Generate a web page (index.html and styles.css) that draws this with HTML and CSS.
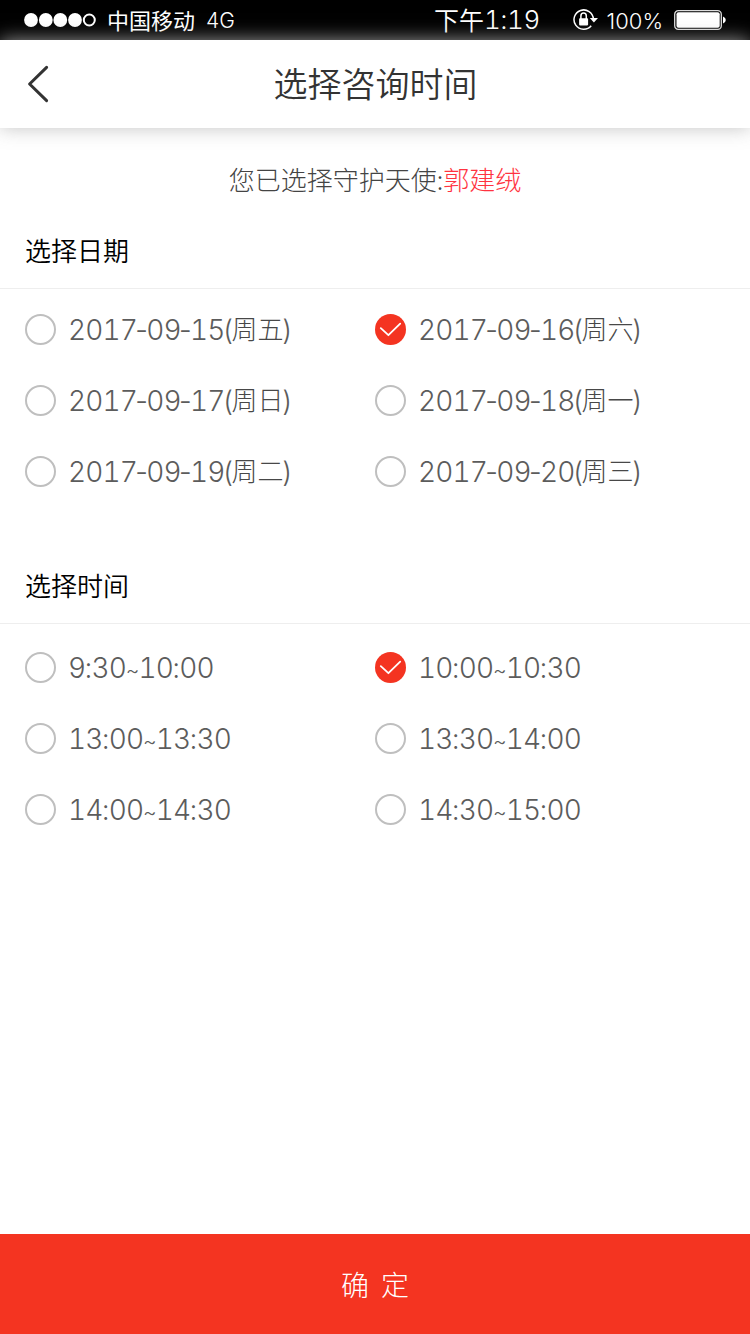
FILE: index.html
```html
<!DOCTYPE html>
<html lang="zh-CN">
<head>
<meta charset="utf-8">
<title>选择咨询时间</title>
<link rel="stylesheet" href="styles.css">
</head>
<body>
<div class="screen">
  <div class="status">
    <div class="status-left">
      <svg class="signal" width="72" height="14" viewBox="0 0 72 14" fill="#fff">
        <circle cx="7" cy="7" r="6.9"/><circle cx="21.8" cy="7" r="6.9"/><circle cx="36.3" cy="7" r="6.9"/><circle cx="51" cy="7" r="6.9"/>
        <circle cx="65.3" cy="7" r="5.5" fill="none" stroke="#fff" stroke-width="2"/>
      </svg>
      <span class="carrier">中国移动</span><span class="network">4G</span>
    </div>
    <div class="clock"><span class="period">下午</span><span class="hour">1<span class="colon">:</span>19</span></div>
    <div class="status-right">
      <svg class="lock" width="25" height="22" viewBox="0 0 25 22">
        <path d="M18.2 16.8A9.7 9.7 0 1 1 20.4 10" fill="none" stroke="#fff" stroke-width="1.5"/>
        <path d="M16.8 9h8.2l-4.1 4.5z" fill="#fff"/>
        <rect x="6.1" y="9.2" width="9" height="7.2" rx=".8" fill="#fff"/>
        <path d="M7.9 10V7a2.7 2.9 0 0 1 5.4 0V10" fill="none" stroke="#fff" stroke-width="1.5"/>
      </svg>
      <span class="percent">100%</span>
      <svg class="battery" width="52" height="20" viewBox="0 0 52 20">
        <rect x=".7" y=".7" width="46.6" height="18.6" rx="3.6" fill="none" stroke="#ddd" stroke-width="1.3"/>
        <rect x="2.5" y="2.3" width="43.2" height="15.4" rx="2" fill="#fff"/>
        <path d="M49 6.5q2.8 1 2.8 3.5t-2.8 3.5z" fill="#fff"/>
      </svg>
    </div>
  </div>
  <header class="header">
    <svg class="back" width="24" height="38" viewBox="0 0 24 38"><path d="M19.6 2.4L2.6 19l17 16.6" fill="none" stroke="#333" stroke-width="3" stroke-linecap="round" stroke-linejoin="round"/></svg>
    <h1 class="title">选择咨询时间</h1>
  </header>
  <main class="content">
    <p class="chosen">您已选择守护天使:<span class="name">郭建绒</span></p>
    <h2 class="heading">选择日期</h2>
    <div class="options dates">
      <label class="option"><span class="radio"></span><span class="num">2017<span class="dash">-</span>09<span class="dash">-</span>15<span class="paren">(</span></span><span class="week">周五</span><span class="num paren">)</span></label>
      <label class="option"><svg class="check" width="31" height="31" viewBox="0 0 31 31"><circle cx="15.5" cy="15.5" r="15.5" fill="#f43421"/><path d="M5.8 14.2l7.6 7L25.2 9.7" fill="none" stroke="#fff" stroke-width="1.8" stroke-linecap="round" stroke-linejoin="round"/></svg><span class="num">2017<span class="dash">-</span>09<span class="dash">-</span>16<span class="paren">(</span></span><span class="week">周六</span><span class="num paren">)</span></label>
      <label class="option"><span class="radio"></span><span class="num">2017<span class="dash">-</span>09<span class="dash">-</span>17<span class="paren">(</span></span><span class="week">周日</span><span class="num paren">)</span></label>
      <label class="option"><span class="radio"></span><span class="num">2017<span class="dash">-</span>09<span class="dash">-</span>18<span class="paren">(</span></span><span class="week">周一</span><span class="num paren">)</span></label>
      <label class="option"><span class="radio"></span><span class="num">2017<span class="dash">-</span>09<span class="dash">-</span>19<span class="paren">(</span></span><span class="week">周二</span><span class="num paren">)</span></label>
      <label class="option"><span class="radio"></span><span class="num">2017<span class="dash">-</span>09<span class="dash">-</span>20<span class="paren">(</span></span><span class="week">周三</span><span class="num paren">)</span></label>
    </div>
    <h2 class="heading">选择时间</h2>
    <div class="options times">
      <label class="option"><span class="radio"></span><span class="num">9<span class="colon">:</span>30<span class="tilde">~</span>10<span class="colon">:</span>00</span></label>
      <label class="option"><svg class="check" width="31" height="31" viewBox="0 0 31 31"><circle cx="15.5" cy="15.5" r="15.5" fill="#f43421"/><path d="M5.8 14.2l7.6 7L25.2 9.7" fill="none" stroke="#fff" stroke-width="1.8" stroke-linecap="round" stroke-linejoin="round"/></svg><span class="num">10<span class="colon">:</span>00<span class="tilde">~</span>10<span class="colon">:</span>30</span></label>
      <label class="option"><span class="radio"></span><span class="num">13<span class="colon">:</span>00<span class="tilde">~</span>13<span class="colon">:</span>30</span></label>
      <label class="option"><span class="radio"></span><span class="num">13<span class="colon">:</span>30<span class="tilde">~</span>14<span class="colon">:</span>00</span></label>
      <label class="option"><span class="radio"></span><span class="num">14<span class="colon">:</span>00<span class="tilde">~</span>14<span class="colon">:</span>30</span></label>
      <label class="option"><span class="radio"></span><span class="num">14<span class="colon">:</span>30<span class="tilde">~</span>15<span class="colon">:</span>00</span></label>
    </div>
  </main>
  <button class="confirm">确 定</button>
</div>
</body>
</html>
```
FILE: styles.css
```css
* { box-sizing: border-box; }
body {
  margin: 0;
  background: #fff;
  font-family: "Noto Sans CJK SC", sans-serif;
}
svg { display: block; flex: none; }
.screen {
  width: 750px;
  height: 1334px;
  display: flex;
  flex-direction: column;
  overflow: hidden;
}
.status {
  height: 40px;
  flex: none;
  background: #000;
  color: #fff;
  display: grid;
  grid-template-columns: 410px 1fr auto;
  align-items: center;
  padding: 0 24px;
  white-space: nowrap;
}
.status-left, .status-right, .clock { display: flex; align-items: center; height: 40px; line-height: 36px; }
.carrier { font-size: 22px; margin: 0 0 3px 11px; }
.network { font-family: Inter, sans-serif; font-size: 21px; font-weight: 350; margin: 1px 0 0 11px; }
.period { font-size: 25px; font-weight: 350; margin-bottom: 3px; }
.hour {
  font-family: Inter, sans-serif;
  font-size: 26px;
  font-weight: 350;
  letter-spacing: -.2px;
  font-variant-numeric: tabular-nums;
}
.status-right { justify-content: flex-end; }
.percent { font-family: Inter, sans-serif; font-size: 22px; font-weight: 300; margin: 1px 11px 0 9px; }
.header {
  height: 88px;
  flex: none;
  position: relative;
  background: #fff;
  box-shadow: 0 0 18px rgba(185, 185, 185, .85);
  display: grid;
  grid-template-columns: 100px 1fr 100px;
  align-items: center;
}
.back { margin: 0 0 1px 27px; }
.title {
  margin: 0;
  padding: 0 0 2px 1px;
  text-align: center;
  font-size: 34px;
  line-height: 84px;
  font-weight: 350;
  color: #333;
}
.content { flex: 1; }
.chosen {
  margin: 31px 0 0;
  text-align: center;
  font-size: 26px;
  line-height: 40px;
  font-weight: 300;
  color: #444;
}
.name { color: #ff3340; }
.heading {
  margin: 0;
  height: 90px;
  padding: 31px 25px 0;
  border-bottom: 1px solid #eee;
  font-size: 26px;
  line-height: 40px;
  font-weight: 350;
  color: #000;
}
.dates { margin: 5px 0 27px; }
.options {
  display: grid;
  grid-template-columns: 350px 350px;
  grid-auto-rows: 71px;
  padding-left: 25px;
}
.times { margin-top: 8px; }
.option {
  display: flex;
  align-items: center;
  color: #5c5c5c;
  line-height: 40px;
  white-space: nowrap;
}
.radio {
  width: 31px;
  height: 31px;
  border: 2px solid #bfbfbf;
  border-radius: 50%;
}
.radio, .check { margin-right: 12px; }
.num {
  font-family: Inter, sans-serif;
  font-size: 28px;
  font-weight: 300;
  letter-spacing: -.9px;
  font-variant-numeric: tabular-nums;
}
.dash, .colon, .tilde, .paren {
  display: inline-flex;
  justify-content: center;
  font-variant-numeric: normal;
  letter-spacing: 0;
}
.dash { width: 9.4px; }
.colon { width: 6.3px; }
.tilde { width: 14px; margin: 0 -1.1px 0 -.3px; font-size: 21px; line-height: 30px; }
.paren { width: 7px; }
.week { font-size: 26px; font-weight: 300; color: #484848; padding-bottom: 3px; }
.confirm {
  height: 100px;
  flex: none;
  border: 0;
  padding: 0;
  background: #f43421;
  color: #fff;
  font-family: "Noto Sans CJK SC", sans-serif;
  font-size: 28px;
  font-weight: 300;
  word-spacing: 6px;
}
```
